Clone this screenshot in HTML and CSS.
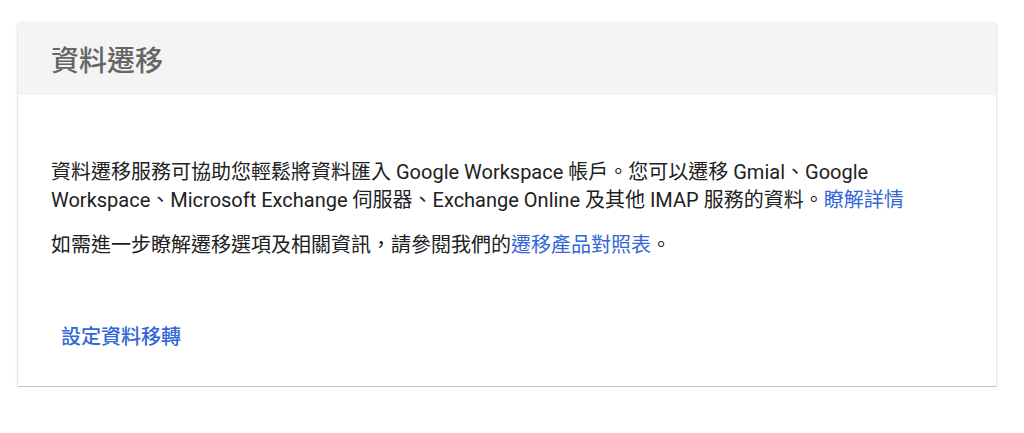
FILE: index.html
```html
<!DOCTYPE html>
<html lang="zh-Hant">
<head>
  <meta charset="UTF-8">
  <meta name="viewport" content="width=device-width, initial-scale=1.0">
  <title>資料遷移</title>
  <link rel="stylesheet" href="styles.css">
</head>
<body>
  <div class="card">
    <div class="card-header">
      <h1>資料遷移</h1>
    </div>
    <div class="card-body">
      <p>資料遷移服務可協助您輕鬆將資料匯入 Google Workspace 帳戶。您可以遷移 Gmial、Google Workspace、Microsoft Exchange 伺服器、Exchange Online 及其他 IMAP 服務的資料。<a href="#">瞭解詳情</a></p>
      <p>如需進一步瞭解遷移選項及相關資訊，請參閱我們的<a href="#">遷移產品對照表</a>。</p>
      <div class="actions">
        <button class="action">設定資料移轉</button>
      </div>
    </div>
  </div>
</body>
</html>
```

FILE: styles.css
```css
body {
  font-family: Roboto, "Noto Sans CJK TC", sans-serif;
  margin: 0;
  padding: 23px 28px 0 18px;
  background: #fff;
  color: #212121;
}
.card {
  background: #fff;
  border-bottom: 1px solid #c4c4c4;
  box-shadow: 0 1px 3px rgba(0,0,0,0.15), 0 0 2px rgba(0,0,0,0.1);
}
.card-header {
  background: #f4f4f4;
  height: 72px;
  display: flex;
  align-items: center;
  padding: 0 33px;
}
h1 {
  margin: 0;
  font-size: 28px;
  font-weight: 500;
  color: #666;
}
.card-body {
  padding: 63px 33px 31px;
}
p {
  margin: 0 0 17px;
  font-size: 20px;
  line-height: 28px;
}
a {
  color: #3367d6;
  text-decoration: none;
}
.actions {
  margin-top: 60px;
  height: 36px;
  display: flex;
  align-items: center;
}
.action {
  background: none;
  border: none;
  padding: 0 10px;
  font-family: inherit;
  font-size: 20px;
  line-height: 36px;
  font-weight: 500;
  color: #3367d6;
  cursor: pointer;
}
```
